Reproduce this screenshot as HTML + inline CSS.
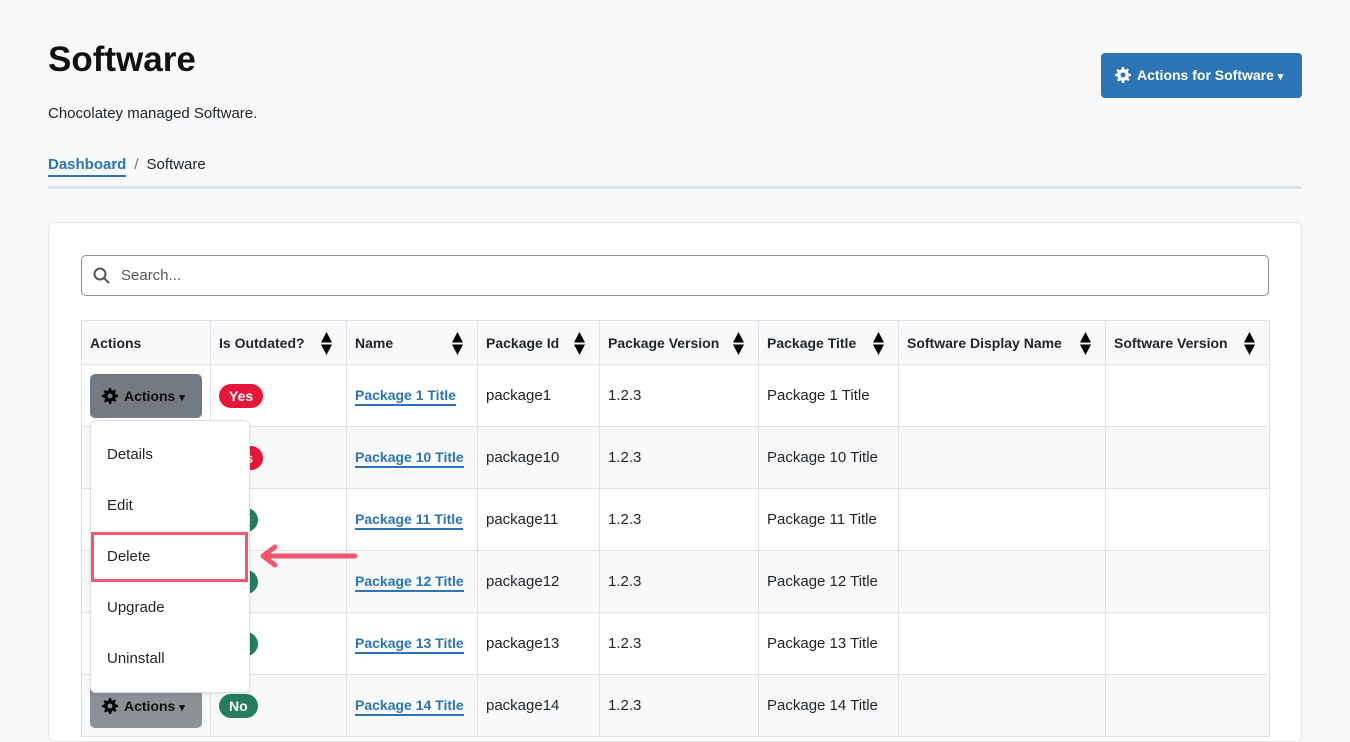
<!DOCTYPE html>
<html><head><meta charset="utf-8"><style>
*{box-sizing:border-box;margin:0;padding:0}
body{width:1350px;height:722px;overflow:hidden;background:#f8f9fa;font-family:"Liberation Sans",sans-serif;color:#212529;position:relative;font-size:15px}
.a{position:absolute}
h1{position:absolute;left:48px;top:40px;font-size:35px;font-weight:bold;color:#111}
.btnb{left:1101px;top:53px;width:201px;height:45px;background:#2c74b3;border-radius:4px;color:#fff;font-weight:bold;font-size:14px;line-height:45px;padding-left:14px;white-space:nowrap}
.card{left:48px;top:222px;width:1254px;height:520px;background:#fff;border:1px solid #e3e6ea;border-radius:6px}
.search{left:81px;top:255px;width:1188px;height:41px;border:1px solid #8a8f95;border-radius:5px;background:#fff}
table{position:absolute;left:81px;top:320px;border-collapse:collapse;font-size:15px;table-layout:fixed;width:1188px;white-space:nowrap}
td,th{border:1px solid #dee2e6;padding:0 8px;text-align:left;vertical-align:middle}
th{height:44px;background:#f8f9fa;font-weight:bold;position:relative;font-size:14px}
td{height:62px}
tr.g td{background:#f8f9fa}
.s{position:absolute;right:14px;top:10px;width:11px;height:25px}
a.l{color:#2c74b3;font-weight:bold;text-decoration:none;border-bottom:2px solid #2c74b3;padding-bottom:1px;font-size:14px}
.bd{display:inline-block;border-radius:14px;color:#fff;font-weight:bold;padding:4px 10px;font-size:14px}
.y{background:#e4163a}.n{background:#267c5e}
.act{display:inline-block;width:112px;height:44px;background:#737a81;border-radius:5px;color:#111;font-weight:bold;line-height:44px;padding-left:12px;font-size:14px}
.dd{left:90px;top:420px;width:160px;height:273px;background:#fff;border:1px solid #dcdfe3;border-radius:6px;box-shadow:0 2px 4px rgba(0,0,0,.08)}
.dd div{position:absolute;left:16px;font-size:15px}
.gear{vertical-align:-3px;margin-right:6px}
</style></head><body>
<svg width="0" height="0" style="position:absolute"><defs><symbol id="g" viewBox="0 0 16 16"><path d="M7 0h2l.4 2.2 1.3.6 1.9-1.3 1.4 1.4-1.3 1.9.6 1.3L16 7v2l-2.2.4-.6 1.3 1.3 1.9-1.4 1.4-1.9-1.3-1.3.6L9 16H7l-.4-2.2-1.3-.6-1.9 1.3-1.4-1.4 1.3-1.9-.6-1.3L0 9V7l2.2-.4.6-1.3-1.3-1.9 1.4-1.4 1.9 1.3 1.3-.6z M8 5.5a2.5 2.5 0 1 0 0 5a2.5 2.5 0 1 0 0-5z" fill-rule="evenodd"/></symbol><symbol id="s" viewBox="0 0 11 25"><path d="M5.5 1L11 11.5H0z M0 13.5H11L5.5 24z"/></symbol></defs></svg>
<h1>Software</h1>
<div class="a" style="left:48px;top:105px">Chocolatey managed Software.</div>
<div class="a" style="left:48px;top:156px"><span style="color:#2c74b3;font-weight:bold;border-bottom:2px solid #2c74b3;padding-bottom:2px">Dashboard</span><span style="color:#6c757d;margin:0 8px">/</span>Software</div>
<div class="a" style="left:48px;top:186px;width:1254px;height:3px;background:#dee2e6"></div>
<div class="a btnb"><svg width="16" height="16" class="gear" fill="#fff"><use href="#g"/></svg>Actions for Software <span style="font-size:11px">▾</span></div>
<div class="a card"></div>
<div class="a search"><svg class="a" style="left:11px;top:11px" width="18" height="18" viewBox="0 0 18 18"><circle cx="7" cy="7" r="5.5" fill="none" stroke="#555" stroke-width="2"/><path d="M11 11l5 5" stroke="#555" stroke-width="2"/></svg><span class="a" style="left:39px;top:11px;color:#555">Search...</span></div>
<table>
<colgroup><col style="width:129px"><col style="width:136px"><col style="width:131px"><col style="width:122px"><col style="width:159px"><col style="width:140px"><col style="width:207px"><col style="width:164px"></colgroup>
<tr><th>Actions</th><th>Is Outdated?<svg class="s"><use href="#s"/></svg></th><th>Name<svg class="s"><use href="#s"/></svg></th><th>Package Id<svg class="s"><use href="#s"/></svg></th><th>Package Version<svg class="s"><use href="#s"/></svg></th><th>Package Title<svg class="s"><use href="#s"/></svg></th><th>Software Display Name<svg class="s"><use href="#s"/></svg></th><th>Software Version<svg class="s"><use href="#s"/></svg></th></tr>
<tr><td><span class="act"><svg width="16" height="16" class="gear"><use href="#g"/></svg>Actions <span style="font-size:11px">▾</span></span></td><td><span class="bd y">Yes</span></td><td><a class="l">Package 1 Title</a></td><td>package1</td><td>1.2.3</td><td>Package 1 Title</td><td></td><td></td></tr>
<tr class="g"><td></td><td><span class="bd y">Yes</span></td><td><a class="l">Package 10 Title</a></td><td>package10</td><td>1.2.3</td><td>Package 10 Title</td><td></td><td></td></tr>
<tr><td></td><td><span class="bd n">No</span></td><td><a class="l">Package 11 Title</a></td><td>package11</td><td>1.2.3</td><td>Package 11 Title</td><td></td><td></td></tr>
<tr class="g"><td></td><td><span class="bd n">No</span></td><td><a class="l">Package 12 Title</a></td><td>package12</td><td>1.2.3</td><td>Package 12 Title</td><td></td><td></td></tr>
<tr><td></td><td><span class="bd n">No</span></td><td><a class="l">Package 13 Title</a></td><td>package13</td><td>1.2.3</td><td>Package 13 Title</td><td></td><td></td></tr>
<tr class="g"><td><span class="act" style="background:#8b9197"><svg width="16" height="16" class="gear"><use href="#g"/></svg>Actions <span style="font-size:11px">▾</span></span></td><td><span class="bd n">No</span></td><td><a class="l">Package 14 Title</a></td><td>package14</td><td>1.2.3</td><td>Package 14 Title</td><td></td><td></td></tr>
</table>
<div class="a dd">
<div style="top:25px">Details</div><div style="top:76px">Edit</div><div style="top:127px">Delete</div><div style="top:178px">Upgrade</div><div style="top:229px">Uninstall</div>
</div>
<div class="a" style="left:91px;top:532px;width:157px;height:50px;border:3px solid #f0566f"></div>
<svg class="a" style="left:255px;top:543px" width="108" height="28" viewBox="0 0 108 28"><path d="M100 13H10M20 4L8 13 20 22" fill="none" stroke="#f0566f" stroke-width="5" stroke-linecap="round" stroke-linejoin="round"/></svg>
</body></html>
